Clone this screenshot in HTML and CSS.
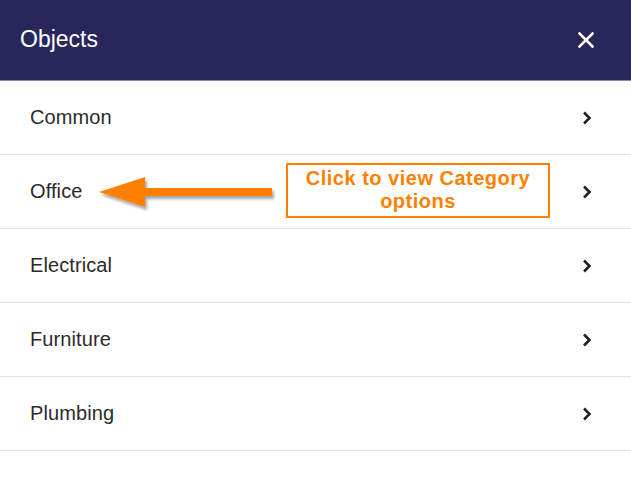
FILE: index.html
```html
<!DOCTYPE html>
<html>
<head>
<meta charset="utf-8">
<link rel="stylesheet" href="styles.css">
</head>
<body>
<div class="panel">
  <header class="head">
    <span class="title">Objects</span>
    <svg class="close" width="16" height="16" viewBox="0 0 16 16"><path d="M1.5 1.5 L14.5 14.5 M14.5 1.5 L1.5 14.5" stroke="#fff" stroke-width="2.6" stroke-linecap="square" fill="none"/></svg>
  </header>
  <ul class="list">
    <li class="row"><span>Common</span><svg class="chev" width="10" height="14" viewBox="0 0 10 14"><path d="M2 1.5 L7.5 7 L2 12.5" stroke="#222" stroke-width="2.6" fill="none"/></svg></li>
    <li class="row"><span>Office</span><svg class="chev" width="10" height="14" viewBox="0 0 10 14"><path d="M2 1.5 L7.5 7 L2 12.5" stroke="#222" stroke-width="2.6" fill="none"/></svg></li>
    <li class="row"><span>Electrical</span><svg class="chev" width="10" height="14" viewBox="0 0 10 14"><path d="M2 1.5 L7.5 7 L2 12.5" stroke="#222" stroke-width="2.6" fill="none"/></svg></li>
    <li class="row"><span>Furniture</span><svg class="chev" width="10" height="14" viewBox="0 0 10 14"><path d="M2 1.5 L7.5 7 L2 12.5" stroke="#222" stroke-width="2.6" fill="none"/></svg></li>
    <li class="row"><span>Plumbing</span><svg class="chev" width="10" height="14" viewBox="0 0 10 14"><path d="M2 1.5 L7.5 7 L2 12.5" stroke="#222" stroke-width="2.6" fill="none"/></svg></li>
  </ul>
  <svg class="arrow" width="190" height="44" viewBox="0 0 190 44">
    <defs>
      <filter id="sh" x="-10%" y="-30%" width="130%" height="170%">
        <feDropShadow dx="2" dy="3" stdDeviation="1.5" flood-color="#000" flood-opacity="0.35"/>
      </filter>
    </defs>
    <path d="M3 22 L49 7 L49 18 L176 18 L176 26 L49 26 L49 37 Z" fill="#ff8000" filter="url(#sh)"/>
  </svg>
  <div class="callout">Click to view Category<br>options</div>
</div>
</body>
</html>
```

FILE: styles.css
```css
* { box-sizing: border-box; }
html, body { margin: 0; padding: 0; background: #fff; }
body { width: 631px; height: 486px; overflow: hidden; font-family: "Liberation Sans", Arial, sans-serif; }
.panel { position: relative; width: 631px; height: 486px; }
.head {
  height: 81px;
  background: #29265b;
  display: flex;
  align-items: center;
  justify-content: space-between;
  padding: 0 37px 0 20px;
  border-bottom: 1px solid #8a88a8;
}
.title { color: #fff; font-size: 23px; position: relative; top: -1px; }
.close { display: block; margin-top: -1px; }
.list { list-style: none; margin: 0; padding: 0; }
.row {
  height: 74px;
  border-bottom: 1px solid #e4e4e4;
  display: flex;
  align-items: center;
  justify-content: space-between;
  padding: 0 39px 0 30px;
  font-size: 20px;
  color: #2b2b2b;
}
.row span { letter-spacing: 0.1px; }
.chev { display: block; }
.arrow { position: absolute; left: 96px; top: 170px; }
.callout {
  position: absolute;
  left: 286px;
  top: 163px;
  width: 264px;
  height: 55px;
  border: 2px solid #ff8000;
  color: #ff8000;
  font-weight: bold;
  font-size: 20px;
  line-height: 23px;
  text-align: center;
  padding-top: 2px;
  letter-spacing: 0.5px;
}
```
